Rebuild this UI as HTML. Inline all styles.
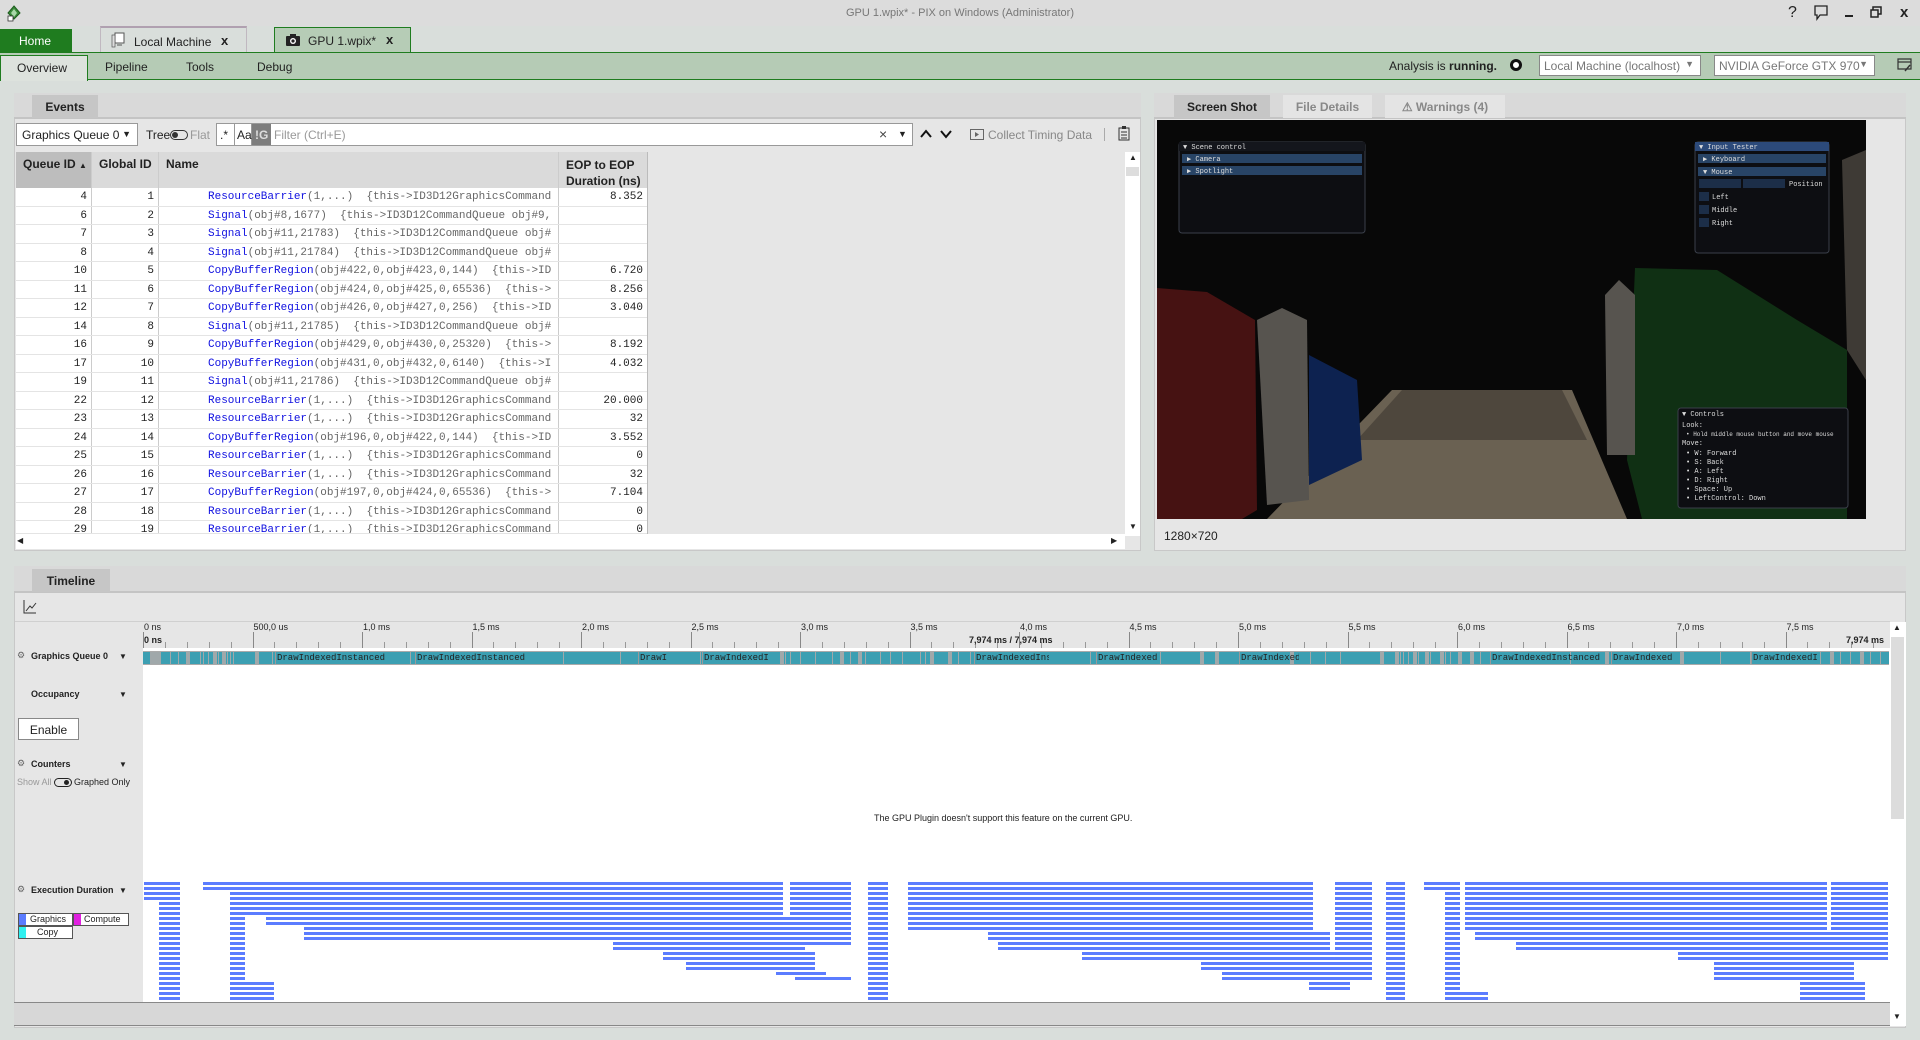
<!DOCTYPE html>
<html><head><meta charset="utf-8">
<style>
*{box-sizing:border-box;margin:0;padding:0}
body{width:1920px;height:1040px;overflow:hidden;background:#d9dedb;font-family:"Liberation Sans",sans-serif;font-size:12px;color:#222;position:relative}
.a{position:absolute}
.mono{font-family:"Liberation Mono",monospace}
.t{white-space:nowrap}
.pre{white-space:pre}
</style></head><body>
<!-- title bar -->
<div class="a" style="left:0;top:0;width:1920px;height:26px;background:#dcdcdc"></div>
<svg class="a" style="left:6px;top:5px" width="16" height="18" viewBox="0 0 16 18"><path d="M8 1 L14 8 L8 14 L2 8Z" fill="#3a8a3a" stroke="#1d5d1d"/><path d="M5 8 L8 4 L11 8 L8 12Z" fill="#a8d8a8"/><rect x="2" y="11" width="5" height="5" fill="#fff" stroke="#333" stroke-width=".8"/></svg>
<div class="a t" style="left:0;width:1920px;top:7px;text-align:center;color:#777;font-size:11px">GPU 1.wpix* - PIX on Windows (Administrator)</div>
<div class="a t" style="left:1788px;top:4px;font-size:16px;color:#222">?</div>
<svg class="a" style="left:1814px;top:5px" width="14" height="16"><path d="M1 1H13V10H6L3 14V10H1Z" fill="none" stroke="#222" stroke-width="1.3"/></svg>
<div class="a" style="left:1845px;top:15px;width:8px;height:2px;background:#222"></div>
<svg class="a" style="left:1870px;top:6px" width="12" height="12"><rect x="3" y="1" width="8" height="7" fill="none" stroke="#222" stroke-width="1.5"/><rect x="1" y="4" width="7" height="7" fill="#dcdcdc" stroke="#222" stroke-width="1.5"/></svg>
<div class="a t" style="left:1900px;top:4px;font-size:15px;font-weight:bold">x</div>
<!-- tabs -->
<div class="a" style="left:0;top:29px;width:72px;height:23px;background:#1f7c1f;color:#fff;padding:5px 0 0 19px;font-size:12px">Home</div>
<div class="a" style="left:100px;top:26px;width:147px;height:26px;border-top:2px solid #b0a0b0;border-left:1px solid #c0b8c0;border-right:1px solid #c0b8c0"></div>
<svg class="a" style="left:111px;top:32px" width="14" height="16"><rect x="4" y="1" width="9" height="10" fill="#fff" stroke="#555"/><rect x="1" y="3" width="3" height="12" fill="#ddd" stroke="#555" stroke-width=".7"/><path d="M6 13H11" stroke="#555"/></svg>
<div class="a t" style="left:134px;top:35px">Local Machine</div>
<div class="a t" style="left:221px;top:33px;font-weight:bold;font-size:13px">x</div>
<div class="a" style="left:274px;top:27px;width:137px;height:26px;background:#b6ccb6;border:1px solid #1f7c1f;border-bottom:none"></div>
<svg class="a" style="left:286px;top:34px" width="14" height="12"><rect x="0" y="2" width="14" height="10" rx="1" fill="#222"/><rect x="4" y="0" width="6" height="3" fill="#222"/><circle cx="7" cy="7" r="3" fill="#fff"/><circle cx="7" cy="7" r="1.6" fill="#222"/></svg>
<div class="a t" style="left:308px;top:34px;font-size:12px">GPU 1.wpix*</div>
<div class="a t" style="left:386px;top:32px;font-weight:bold;font-size:13px">x</div>
<!-- menu bar -->
<div class="a" style="left:0;top:52px;width:1920px;height:28px;background:#b5cbb5;border-top:1px solid #1f7c1f;border-bottom:1px solid #1f7c1f"></div>
<div class="a" style="left:0;top:55px;width:88px;height:26px;background:#dde2dd;border:1px solid #1f7c1f;border-bottom:none;padding:5px 0 0 16px">Overview</div>
<div class="a t" style="left:105px;top:60px">Pipeline</div>
<div class="a t" style="left:186px;top:60px">Tools</div>
<div class="a t" style="left:257px;top:60px">Debug</div>
<div class="a t" style="left:1389px;top:59px">Analysis is <b>running.</b></div>
<div class="a" style="left:1510px;top:59px;width:12px;height:12px;border-radius:50%;border:3px solid #111;background:#fff"></div>
<div class="a t" style="left:1539px;top:55px;width:162px;height:21px;background:#fff;border:1px solid #888;color:#777;padding:3px 0 0 4px">Local Machine (localhost)<span style="position:absolute;right:6px;top:3px;font-size:9px">▼</span></div>
<div class="a t" style="left:1714px;top:55px;width:161px;height:21px;background:#fff;border:1px solid #888;color:#777;padding:3px 0 0 4px">NVIDIA GeForce GTX 970<span style="position:absolute;right:6px;top:3px;font-size:9px">▼</span></div>
<svg class="a" style="left:1897px;top:57px" width="16" height="16"><path d="M1 2H14V12H1Z M1 5H14" fill="none" stroke="#333" stroke-width="1.2"/><path d="M8 14 L13 8" stroke="#333" stroke-width="1.4"/></svg>

<!-- Events panel -->
<div class="a" style="left:14px;top:93px;width:1127px;height:458px;background:#e6e6e6;border:1px solid #c8c8c8"></div>
<div class="a" style="left:14px;top:93px;width:1127px;height:26px;background:#d9d9d9;border-bottom:2px solid #c4c4c4"></div>
<div class="a" style="left:32px;top:95px;width:66px;height:23px;background:#c6c6c6;text-align:center;padding-top:5px;font-weight:bold">Events</div>
<div class="a t" style="left:16px;top:123px;width:122px;height:23px;background:#fff;border:1px solid #999;padding:4px 0 0 5px">Graphics Queue 0<span style="position:absolute;right:6px;top:5px;font-size:9px">▼</span></div>
<div class="a t" style="left:146px;top:128px">Tree</div>
<div class="a" style="left:170px;top:130px;width:18px;height:10px;border:1.5px solid #333;border-radius:5px"></div>
<div class="a" style="left:172px;top:132px;width:6px;height:6px;background:#333;border-radius:3px"></div>
<div class="a t" style="left:190px;top:128px;color:#999">Flat</div>
<div class="a" style="left:216px;top:123px;width:697px;height:23px;background:#fff;border:1px solid #999"></div>
<div class="a t" style="left:217px;top:124px;width:18px;height:21px;border-right:1px solid #999;padding:4px 0 0 3px">.*</div>
<div class="a t" style="left:235px;top:124px;width:17px;height:21px;border-right:1px solid #999;padding:4px 0 0 2px">Aa</div>
<div class="a t" style="left:252px;top:124px;width:19px;height:21px;background:#7d7d7d;color:#ddd;padding:4px 0 0 3px;font-weight:bold">!G</div>
<div class="a t" style="left:274px;top:128px;color:#999">Filter (Ctrl+E)</div>
<div class="a t" style="left:879px;top:126px;color:#444;font-size:14px">×</div>
<div class="a t" style="left:898px;top:129px;font-size:9px">▼</div>
<svg class="a" style="left:920px;top:129px" width="40" height="10"><path d="M1 8L6 2L11 8M21 2L26 8L31 2" fill="none" stroke="#111" stroke-width="2"/></svg>
<svg class="a" style="left:970px;top:129px" width="14" height="11"><rect x=".5" y=".5" width="13" height="10" fill="none" stroke="#666"/><path d="M5 3L9 5.5L5 8Z" fill="#666"/></svg>
<div class="a t" style="left:988px;top:128px;color:#888">Collect Timing Data</div>
<div class="a" style="left:1104px;top:128px;width:1px;height:13px;background:#aaa"></div>
<svg class="a" style="left:1118px;top:125px" width="12" height="16"><rect x="1" y="3" width="10" height="12" fill="none" stroke="#333"/><rect x="4" y="1" width="4" height="3" fill="#333"/><path d="M3 7H9M3 10H9M3 13H9" stroke="#333"/></svg>
<!-- table -->
<div class="a" style="left:16px;top:152px;width:631px;height:382px;background:#fff"></div>
<div class="a" style="left:16px;top:152px;width:631px;height:36px;background:#dadada"></div>
<div class="a" style="left:16px;top:152px;width:75px;height:36px;background:#bdbdbd"></div>
<div class="a t" style="left:23px;top:157px;font-weight:bold">Queue ID <span style="font-size:8px">▲</span></div>
<div class="a t" style="left:99px;top:157px;font-weight:bold">Global ID</div>
<div class="a t" style="left:166px;top:157px;font-weight:bold">Name</div>
<div class="a t" style="left:566px;top:157px;font-weight:bold;line-height:16px">EOP to EOP<br>Duration (ns)</div>
<div class="a" style="left:91px;top:152px;width:1px;height:382px;background:#ccc"></div>
<div class="a" style="left:158px;top:152px;width:1px;height:382px;background:#ccc"></div>
<div class="a" style="left:558px;top:152px;width:1px;height:382px;background:#ccc"></div>
<div class="a" style="left:647px;top:152px;width:1px;height:382px;background:#bbb"></div>
<div id="rows"></div>
<div class="a" style="left:1125px;top:152px;width:15px;height:384px;background:#fff"></div>
<div class="a t" style="left:1129px;top:153px;font-size:8px">▲</div>
<div class="a" style="left:1126px;top:167px;width:13px;height:9px;background:#ddd"></div>
<div class="a t" style="left:1129px;top:522px;font-size:8px">▼</div>
<div class="a" style="left:16px;top:534px;width:1109px;height:15px;background:#fff"></div>
<div class="a t" style="left:17px;top:536px;font-size:8px">◀</div>
<div class="a t" style="left:1111px;top:536px;font-size:8px">▶</div>

<!-- Screenshot panel -->
<div class="a" style="left:1154px;top:93px;width:752px;height:458px;background:#e6e6e6;border:1px solid #c8c8c8"></div>
<div class="a" style="left:1154px;top:93px;width:752px;height:26px;background:#d9d9d9;border-bottom:2px solid #c4c4c4"></div>
<div class="a" style="left:1174px;top:95px;width:96px;height:23px;background:#c6c6c6;text-align:center;padding-top:5px;font-weight:bold">Screen Shot</div>
<div class="a" style="left:1283px;top:95px;width:89px;height:23px;background:#e4e4e4;text-align:center;padding-top:5px;font-weight:bold;color:#888">File Details</div>
<div class="a" style="left:1385px;top:95px;width:120px;height:23px;background:#e4e4e4;text-align:center;padding-top:5px;font-weight:bold;color:#888">⚠ Warnings (4)</div>
<svg class="a" style="left:1157px;top:120px" width="709" height="399" viewBox="0 0 709 399">
<rect width="709" height="399" fill="#080808"/>
<path d="M235 270 L415 270 L470 399 L110 399Z" fill="#6a6152"/>
<path d="M245 270 L405 270 L430 320 L200 320Z" fill="#4e473d"/>
<path d="M0 168 L50 172 L98 200 L100 390 L85 399 L0 399Z" fill="#461212"/>
<path d="M100 200 L125 188 L150 200 L152 380 L110 385Z" fill="#57544f"/>
<path d="M152 235 L200 260 L205 340 L152 365Z" fill="#0d2250"/>
<path d="M478 148 L560 150 L640 200 L690 230 L690 399 L485 399 L470 340Z" fill="#103014"/>
<path d="M448 175 L462 160 L478 175 L478 335 L450 335Z" fill="#57544f"/>
<path d="M685 40 L709 30 L709 260 L690 230Z" fill="#3e3a35"/>
<g font-family="Liberation Mono,monospace" font-size="7" fill="#ddd">
<rect x="22" y="22" width="186" height="91" rx="3" fill="#0d0e12" stroke="#3a3f4a"/>
<rect x="22" y="22" width="186" height="9" fill="#14161c"/><text x="26" y="29">▼ Scene control</text>
<rect x="25" y="34" width="180" height="9" fill="#284466"/><text x="30" y="41">▶ Camera</text>
<rect x="25" y="46" width="180" height="9" fill="#284466"/><text x="30" y="53">▶ Spotlight</text>
<rect x="538" y="22" width="134" height="111" rx="3" fill="#0d0e12" stroke="#3a3f4a"/>
<rect x="538" y="22" width="134" height="9" fill="#2c4a7a"/><text x="542" y="29">▼ Input Tester</text>
<rect x="541" y="34" width="128" height="9" fill="#284466"/><text x="546" y="41">▶ Keyboard</text>
<rect x="541" y="47" width="128" height="9" fill="#284466"/><text x="546" y="54">▼ Mouse</text>
<rect x="542" y="59" width="42" height="9" fill="#1c2e48"/><rect x="586" y="59" width="42" height="9" fill="#1c2e48"/><text x="632" y="66">Position</text>
<rect x="542" y="72" width="10" height="9" fill="#1c2e48"/><text x="555" y="79">Left</text>
<rect x="542" y="85" width="10" height="9" fill="#1c2e48"/><text x="555" y="92">Middle</text>
<rect x="542" y="98" width="10" height="9" fill="#1c2e48"/><text x="555" y="105">Right</text>
<rect x="521" y="288" width="170" height="100" rx="3" fill="#0d0e12" stroke="#3a3f4a"/>
<text x="525" y="296">▼ Controls</text><text x="525" y="307">Look:</text><text x="529" y="316" font-size="6">• Hold middle mouse button and move mouse</text><text x="525" y="325">Move:</text>
<text x="529" y="335">• W: Forward</text><text x="529" y="344">• S: Back</text><text x="529" y="353">• A: Left</text><text x="529" y="362">• D: Right</text><text x="529" y="371">• Space: Up</text><text x="529" y="380">• LeftControl: Down</text>
</g></svg>
<div class="a t" style="left:1164px;top:529px">1280×720</div>

<!-- Timeline panel -->
<div class="a" style="left:14px;top:566px;width:1892px;height:462px;background:#e6e6e6;border:1px solid #c8c8c8"></div>
<div class="a" style="left:14px;top:566px;width:1892px;height:27px;background:#d9d9d9;border-bottom:2px solid #c4c4c4"></div>
<div class="a" style="left:32px;top:569px;width:78px;height:23px;background:#c6c6c6;text-align:center;padding-top:5px;font-weight:bold">Timeline</div>
<svg class="a" style="left:23px;top:600px" width="14" height="14"><path d="M1 0V13H13" fill="none" stroke="#333"/><path d="M3 11L7 6L9 8L13 3" fill="none" stroke="#333"/></svg>
<div class="a" style="left:15px;top:621px;width:1875px;height:1px;background:#d0d0d0"></div>
<div class="a" style="left:143px;top:648px;width:1747px;height:354px;background:#fff"></div>
<div id="ruler"></div>
<div class="a t" style="left:144px;top:635px;font-size:9px;font-weight:bold">0 ns</div>
<div class="a t" style="left:969px;top:635px;font-size:9px;font-weight:bold">7,974 ms / 7,974 ms</div>
<div class="a t" style="left:1846px;top:635px;font-size:9px;font-weight:bold">7,974 ms</div>
<div class="a" style="left:143px;top:651px;width:1746px;height:14px;background:#3c9fb2;border-top:1px solid #aaa;border-bottom:1px solid #aaa"></div>
<div id="qbar"></div>
<!-- labels -->
<div class="a t" style="left:17px;top:650px;font-size:9px;color:#666">⚙</div>
<div class="a t" style="left:31px;top:651px;font-size:9px;font-weight:bold">Graphics Queue 0</div>
<div class="a t" style="left:119px;top:652px;font-size:8px">▼</div>
<div class="a t" style="left:31px;top:689px;font-size:9px;font-weight:bold">Occupancy</div>
<div class="a t" style="left:119px;top:690px;font-size:8px">▼</div>
<div class="a" style="left:18px;top:718px;width:61px;height:22px;background:#fff;border:1px solid #888;text-align:center;padding-top:4px;font-size:12px">Enable</div>
<div class="a t" style="left:17px;top:758px;font-size:9px;color:#666">⚙</div>
<div class="a t" style="left:31px;top:759px;font-size:9px;font-weight:bold">Counters</div>
<div class="a t" style="left:119px;top:760px;font-size:8px">▼</div>
<div class="a t" style="left:17px;top:777px;font-size:9px;color:#999">Show All</div>
<div class="a" style="left:54px;top:778px;width:18px;height:9px;border:1.5px solid #222;border-radius:5px"></div>
<div class="a" style="left:64px;top:780px;width:5px;height:5px;background:#222;border-radius:3px"></div>
<div class="a t" style="left:74px;top:777px;font-size:9px">Graphed Only</div>
<div class="a t" style="left:17px;top:884px;font-size:9px;color:#666">⚙</div>
<div class="a t" style="left:31px;top:885px;font-size:9px;font-weight:bold">Execution Duration</div>
<div class="a t" style="left:119px;top:886px;font-size:8px">▼</div>
<div class="a" style="left:18px;top:913px;width:55px;height:13px;border:1px solid #555;background:#fff"></div>
<div class="a" style="left:19px;top:914px;width:7px;height:11px;background:#5b7cff"></div>
<div class="a t" style="left:30px;top:914px;font-size:9px">Graphics</div>
<div class="a" style="left:73px;top:913px;width:56px;height:13px;border:1px solid #555;background:#fff"></div>
<div class="a" style="left:74px;top:914px;width:7px;height:11px;background:#e020e0"></div>
<div class="a t" style="left:84px;top:914px;font-size:9px">Compute</div>
<div class="a" style="left:18px;top:926px;width:55px;height:13px;border:1px solid #555;background:#fff"></div>
<div class="a" style="left:19px;top:927px;width:7px;height:11px;background:#30f0f0"></div>
<div class="a t" style="left:37px;top:927px;font-size:9px">Copy</div>
<div class="a t" style="left:874px;top:813px;font-size:9px">The GPU Plugin doesn't support this feature on the current GPU.</div>
<div id="bars"></div>
<div class="a" style="left:14px;top:1002px;width:1876px;height:24px;background:#d7d7d7;border-top:1px solid #888;border-bottom:1px solid #888"></div>
<div class="a" style="left:1890px;top:622px;width:16px;height:404px;background:#fff"></div>
<div class="a" style="left:1891px;top:637px;width:13px;height:182px;background:#dcdcdc"></div>
<div class="a t" style="left:1893px;top:623px;font-size:8px">▲</div>
<div class="a t" style="left:1893px;top:1012px;font-size:8px">▼</div>
<script>
var rd=[[4,1,"ResourceBarrier","(1,...)  {this->ID3D12GraphicsCommand","8.352"],[6,2,"Signal","(obj#8,1677)  {this->ID3D12CommandQueue obj#9,",""],[7,3,"Signal","(obj#11,21783)  {this->ID3D12CommandQueue obj#",""],[8,4,"Signal","(obj#11,21784)  {this->ID3D12CommandQueue obj#",""],[10,5,"CopyBufferRegion","(obj#422,0,obj#423,0,144)  {this->ID","6.720"],[11,6,"CopyBufferRegion","(obj#424,0,obj#425,0,65536)  {this->","8.256"],[12,7,"CopyBufferRegion","(obj#426,0,obj#427,0,256)  {this->ID","3.040"],[14,8,"Signal","(obj#11,21785)  {this->ID3D12CommandQueue obj#",""],[16,9,"CopyBufferRegion","(obj#429,0,obj#430,0,25320)  {this->","8.192"],[17,10,"CopyBufferRegion","(obj#431,0,obj#432,0,6140)  {this->I","4.032"],[19,11,"Signal","(obj#11,21786)  {this->ID3D12CommandQueue obj#",""],[22,12,"ResourceBarrier","(1,...)  {this->ID3D12GraphicsCommand","20.000"],[23,13,"ResourceBarrier","(1,...)  {this->ID3D12GraphicsCommand","32"],[24,14,"CopyBufferRegion","(obj#196,0,obj#422,0,144)  {this->ID","3.552"],[25,15,"ResourceBarrier","(1,...)  {this->ID3D12GraphicsCommand","0"],[26,16,"ResourceBarrier","(1,...)  {this->ID3D12GraphicsCommand","32"],[27,17,"CopyBufferRegion","(obj#197,0,obj#424,0,65536)  {this->","7.104"],[28,18,"ResourceBarrier","(1,...)  {this->ID3D12GraphicsCommand","0"],[29,19,"ResourceBarrier","(1,...)  {this->ID3D12GraphicsCommand","0"]];
var h="";rd.forEach(function(r,i){var y=188+i*18.5;var ht=Math.min(18.5,534-y);
h+='<div class="a" style="left:16px;top:'+y+'px;width:631px;height:'+ht+'px;overflow:hidden;border-bottom:1px solid #e4e4e4">'+
'<div class="a mono t" style="right:560px;top:3px;font-size:11px">'+r[0]+'</div>'+
'<div class="a mono t" style="right:493px;top:3px;font-size:11px">'+r[1]+'</div>'+
'<div class="a mono pre" style="left:192px;top:3px;width:344px;overflow:hidden;font-size:11px;color:#666"><span style="color:#1010e0">'+r[2]+'</span>'+r[3]+'</div>'+
'<div class="a mono t" style="right:4px;top:3px;font-size:11px">'+r[4]+'</div></div>';});
document.getElementById("rows").innerHTML=h;
var lab=["0 ns","500,0 us","1,0 ms","1,5 ms","2,0 ms","2,5 ms","3,0 ms","3,5 ms","4,0 ms","4,5 ms","5,0 ms","5,5 ms","6,0 ms","6,5 ms","7,0 ms","7,5 ms"];
h="";var s=109.5;for(var i=0;i<16;i++){var x=143+i*s;h+='<div class="a t" style="left:'+(x+1)+'px;top:622px;font-size:9px">'+lab[i]+'</div><div class="a" style="left:'+x+'px;top:632px;width:1px;height:16px;background:#888"></div>';
for(var k=1;k<5;k++)h+='<div class="a" style="left:'+(x+k*s/5)+'px;top:642px;width:1px;height:6px;background:#999"></div>';}
document.getElementById("ruler").innerHTML=h;
h="";var dl=[[275,135,"DrawIndexedInstanced"],[415,135,"DrawIndexedInstanced"],[638,30,"DrawI"],[702,70,"DrawIndexedI"],[974,75,"DrawIndexedInstanced"],[1096,63,"DrawIndexed"],[1239,60,"DrawIndexedI"],[1490,120,"DrawIndexedInstanced"],[1611,70,"DrawIndexed"],[1751,70,"DrawIndexedI"]];
var gx=[150,153,156,160,170,178,186,200,203,208,213,218,222,227,230,233,255,272,410,563,620,700,780,785,790,800,815,832,840,850,858,865,880,890,902,920,925,930,948,958,970,1090,1160,1200,1215,1290,1310,1325,1340,1380,1395,1400,1403,1408,1413,1418,1425,1430,1440,1445,1450,1458,1470,1490,1480,1570,1605,1680,1720,1750,1820,1830,1840,1850,1860,1870,1880];
gx.forEach(function(x){h+='<div class="a" style="left:'+x+'px;top:652px;width:'+(x%3?1:4)+'px;height:12px;background:#a0a8aa"></div>';});
dl.forEach(function(d){h+='<div class="a mono t" style="left:'+d[0]+'px;top:652px;width:'+d[1]+'px;overflow:hidden;font-size:9px;color:#222;border-left:1px solid #999;padding-left:1px;line-height:12px">'+d[2]+'</div>';});
document.getElementById("qbar").innerHTML=h;
var sp=[[144,180,0,3],[159,180,0,23],[203,245,0,1],[230,245,0,23],[232,274,20,23],[245,783,0,1],[230,783,2,6],[266,790,7,8],[304,805,9,11],[613,805,12,13],[663,815,14,15],[686,815,16,17],[776,826,18,18],[795,851,19,19],[790,851,0,12],[868,888,0,23],[908,1313,0,9],[988,1330,10,11],[998,1330,12,13],[1082,1340,14,15],[1201,1340,16,17],[1222,1350,18,19],[1309,1350,20,21],[1335,1372,0,19],[1386,1405,0,23],[1424,1460,0,1],[1445,1460,2,23],[1445,1488,22,23],[1465,1827,0,9],[1475,1836,10,11],[1516,1840,12,13],[1678,1840,14,15],[1714,1854,16,19],[1800,1865,20,23],[1831,1888,0,15]];
h="";sp.forEach(function(a){for(var r=a[2];r<=a[3];r++){h+='<div class="a" style="left:'+a[0]+'px;top:'+(882+r*5)+'px;width:'+(a[1]-a[0])+'px;height:3px;background:#5b7cff"></div>';}});
document.getElementById("bars").innerHTML=h;
</script>
</body></html>
